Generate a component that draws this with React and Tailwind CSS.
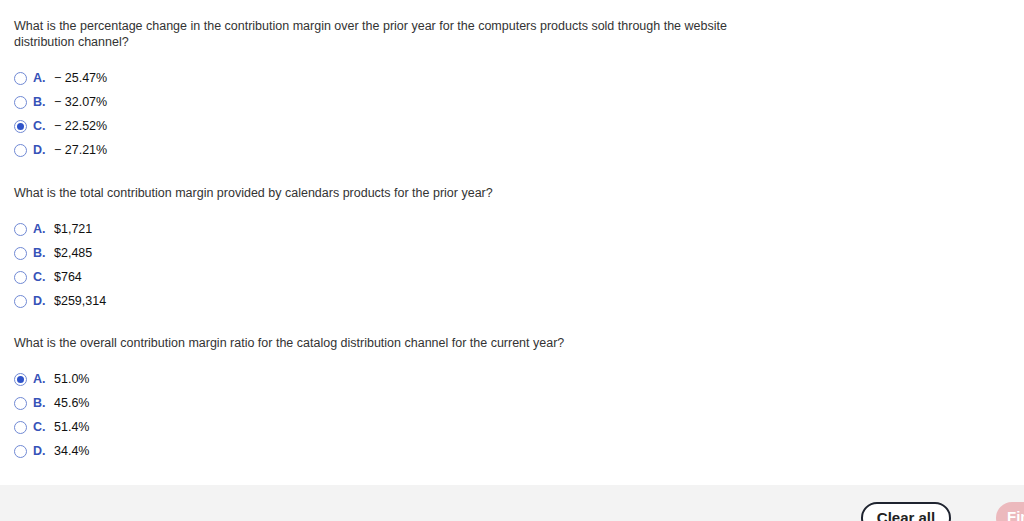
import React from 'react';

const questions = [
  {
    text: 'What is the percentage change in the contribution margin over the prior year for the computers products sold through the website distribution channel?',
    options: ['\u2212\u00a025.47%', '\u2212\u00a032.07%', '\u2212\u00a022.52%', '\u2212\u00a027.21%'],
    selected: 2,
    gap: 'mt-0',
  },
  {
    text: 'What is the total contribution margin provided by calendars products for the prior year?',
    options: ['$1,721', '$2,485', '$764', '$259,314'],
    selected: -1,
    gap: 'mt-[23px]',
  },
  {
    text: 'What is the overall contribution margin ratio for the catalog distribution channel for the current year?',
    options: ['51.0%', '45.6%', '51.4%', '34.4%'],
    selected: 0,
    gap: 'mt-[22px]',
  },
];

const letters = ['A.', 'B.', 'C.', 'D.'];

const Radio = ({ checked }) => (
  <span className="w-[13px] h-[13px] rounded-full border border-[#7089d4] flex items-center justify-center shrink-0 bg-white">
    {checked && <span className="w-[7px] h-[7px] rounded-full bg-[#2f53c9]"></span>}
  </span>
);

const Question = ({ q }) => (
  <div className={q.gap}>
    <p className="text-[12.5px] leading-[16px] text-[#333] max-w-[740px]">{q.text}</p>
    <div className="mt-[16px] flex flex-col">
      {q.options.map((opt, i) => (
        <div key={i} className="h-[24px] flex items-center">
          <Radio checked={q.selected === i} />
          <span className="ml-[6px] w-[21px] text-[12.5px] font-bold text-[#3652b8]">{letters[i]}</span>
          <span className="text-[12.5px] text-[#111]">{opt}</span>
        </div>
      ))}
    </div>
  </div>
);

export default function App() {
  return (
    <div className="w-[1024px] h-[521px] overflow-hidden bg-white flex flex-col" style={{ fontFamily: '"Liberation Sans", Arial, sans-serif' }}>
      <div className="pl-[14px] pt-[18px] h-[485px]">
        {questions.map((q, i) => (
          <Question key={i} q={q} />
        ))}
      </div>
      <div className="flex-1 bg-[#f3f3f3] flex items-start pt-[17px] pl-[861px] gap-[45px] overflow-hidden">
        <button className="shrink-0 w-[90px] h-[32px] rounded-full border-2 border-[#1f2430] bg-white text-[15px] font-bold text-[#222] leading-none pb-[2px]">
          Clear all
        </button>
        <button className="shrink-0 w-[110px] h-[32px] rounded-full bg-[#ecb9bd] text-[15px] font-bold text-white text-left pl-[11px] pb-[2px]">
          Final check
        </button>
      </div>
    </div>
  );
}
